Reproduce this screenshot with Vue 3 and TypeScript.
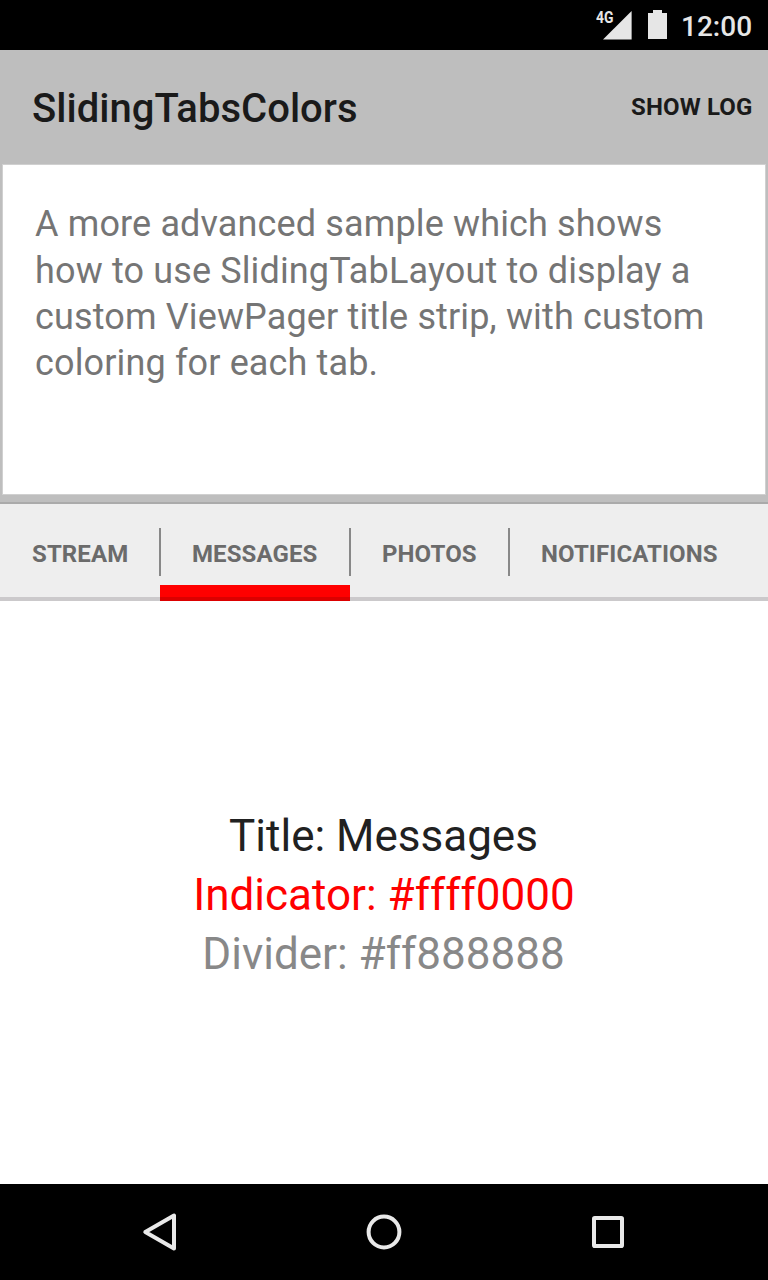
<script setup lang="ts">
import { ref, computed } from 'vue'

interface Tab {
  title: string
  indicator: string
  divider: string
  width: number
}

const tabs: Tab[] = [
  { title: 'Stream', indicator: '#ff0000ff', divider: '#ff888888', width: 160 },
  { title: 'Messages', indicator: '#ffff0000', divider: '#ff888888', width: 190 },
  { title: 'Photos', indicator: '#ffffff00', divider: '#ff888888', width: 159 },
  { title: 'Notifications', indicator: '#ff00ff00', divider: '#ff888888', width: 241 },
]

const lines: string[] = [
  'A more advanced sample which shows',
  'how to use SlidingTabLayout to display a',
  'custom ViewPager title strip, with custom',
  'coloring for each tab.',
]

const selected = ref(1)
const current = computed(() => tabs[selected.value])
const argb = (c: string): string => '#' + c.slice(3)
</script>

<template>
  <div class="screen">
    <header class="status">
      <svg class="signal" width="38" height="30" viewBox="0 0 38 30">
        <path d="M9 29.6H37.6V1z" fill="#e6e6e6" />
      </svg>
      <span class="network">4G</span>
      <svg class="battery" width="19" height="29" viewBox="0 0 19 29">
        <path d="M0 3H5V0H14V3H19V29H0z" fill="#e6e6e6" />
      </svg>
      <span class="clock">12:00</span>
    </header>

    <div class="appbar">
      <h1 class="name">SlidingTabsColors</h1>
      <button class="action">SHOW LOG</button>
    </div>

    <section class="card-wrap">
      <div class="card">
        <p v-for="line in lines" :key="line" class="line">{{ line }}</p>
      </div>
    </section>

    <nav class="tabs">
      <button
        v-for="(tab, i) in tabs"
        :key="tab.title"
        class="tab"
        :class="{ active: i === selected }"
        :style="{ width: tab.width + 'px', '--indicator': argb(tab.indicator), '--divider': argb(tab.divider) }"
        @click="selected = i"
      >
        <span class="label">{{ tab.title.toUpperCase() }}</span>
      </button>
    </nav>

    <main class="page">
      <p class="fact title">Title: {{ current.title }}</p>
      <p class="fact indicator" :style="{ color: argb(current.indicator) }">Indicator: {{ current.indicator }}</p>
      <p class="fact divider" :style="{ color: argb(current.divider) }">Divider: {{ current.divider }}</p>
    </main>

    <footer class="navbar">
      <svg width="48" height="48" viewBox="0 0 48 48">
        <path d="M9.3 24L38 7.6V40.4z" />
      </svg>
      <svg width="48" height="48" viewBox="0 0 48 48">
        <circle cx="24" cy="24" r="15.4" />
      </svg>
      <svg width="48" height="48" viewBox="0 0 48 48">
        <rect x="10" y="10" width="28" height="28" rx="0.8" />
      </svg>
    </footer>
  </div>
</template>

<style>
body {
  margin: 0;
}
</style>

<style scoped>
.screen {
  width: 768px;
  height: 1280px;
  display: flex;
  flex-direction: column;
  overflow: hidden;
  background: #fff;
  font-family: Roboto, "Noto Sans", sans-serif;
}
.screen button {
  border: 0;
  padding: 0;
  margin: 0;
  background: none;
  font-family: inherit;
  white-space: nowrap;
}
h1,
p {
  margin: 0;
}
.status {
  position: relative;
  box-sizing: border-box;
  height: 50px;
  padding: 10px 17px 0 0;
  display: flex;
  justify-content: flex-end;
  background: #000;
  color: #e6e6e6;
}
.signal {
  margin-right: 16px;
}
.network {
  position: absolute;
  left: 595.6px;
  top: 8px;
  font-size: 16px;
  line-height: 20px;
  font-weight: 700;
  transform: scaleX(0.87);
  transform-origin: left;
}
.battery {
  margin-right: 14px;
}
.clock {
  width: 70px;
  font-size: 28px;
  line-height: 34px;
  font-weight: 500;
  white-space: nowrap;
}
.appbar {
  height: 114px;
  padding: 0 15.5px 0 32px;
  display: flex;
  justify-content: space-between;
  background: #bebebe;
  color: #1a1a1a;
}
.name {
  font-size: 40px;
  line-height: 118px;
  font-weight: 500;
  letter-spacing: 0.03px;
}
.screen .action {
  height: 114px;
  color: #1a1a1a;
  font-size: 24px;
  line-height: 114px;
  font-weight: 700;
  letter-spacing: 0.13px;
}
.card-wrap {
  box-sizing: border-box;
  height: 340px;
  padding: 0 2px 7px;
  border-bottom: 2px solid #aaa;
  background: #bebebe;
}
.card {
  box-sizing: border-box;
  height: 331px;
  padding: 36px 32px 0;
  border: 1px solid #d0d0d0;
  background: #fff;
  color: #757575;
}
.line {
  font-size: 36px;
  line-height: 46px;
  letter-spacing: 0.14px;
  white-space: nowrap;
}
.line:first-child {
  margin-bottom: 1px;
}
.tabs {
  box-sizing: border-box;
  height: 97px;
  display: flex;
  background: linear-gradient(#eee 93px, #cbc9cb 93px);
}
.tab {
  position: relative;
  height: 97px;
  flex: none;
  display: flex;
  align-items: flex-start;
}
.tab:not(:last-child)::after {
  content: "";
  position: absolute;
  right: -1px;
  top: 24px;
  width: 2px;
  height: 48px;
  background: var(--divider);
}
.tab.active::before {
  content: "";
  position: absolute;
  left: 0;
  right: 0;
  bottom: 0;
  height: 12px;
  border-bottom: 4px solid #dc0000;
  background: var(--indicator);
}
.label {
  padding-left: 32px;
  color: #6b6b6b;
  font-size: 24px;
  line-height: 100px;
  font-weight: 700;
  letter-spacing: 0.1px;
}
.page {
  flex: 1;
  padding-top: 206px;
  text-align: center;
}
.fact {
  font-size: 44px;
  line-height: 59px;
  white-space: nowrap;
}
.title,
.divider {
  padding-right: 1px;
}
.title {
  color: #212121;
}
.navbar {
  height: 96px;
  padding: 0 136px;
  display: flex;
  align-items: center;
  justify-content: space-between;
  background: #000;
}
.navbar svg {
  fill: none;
  stroke: #e9e9e9;
  stroke-width: 4;
  stroke-linejoin: round;
}
</style>
